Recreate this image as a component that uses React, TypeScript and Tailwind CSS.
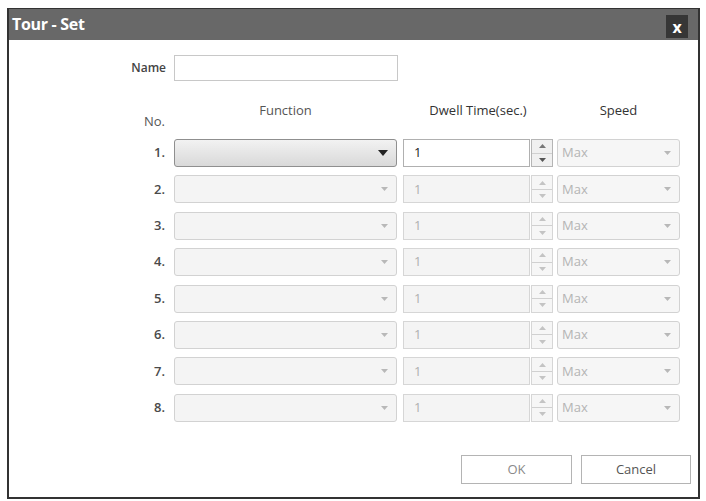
const rows = [1, 2, 3, 4, 5, 6, 7, 8];

const Spinner = ({ active }: { active: boolean }) => (
  <div
    className={`w-[22px] h-full flex flex-col border ${
      active ? "border-[#b5b5b5] bg-[#f0f0f0]" : "border-[#d6d6d6] bg-[#f6f6f6]"
    }`}
  >
    <div className="flex-1 flex items-center justify-center border-b border-[#d0d0d0]">
      <svg width="7" height="4" viewBox="0 0 7 4">
        <path d="M0 4 L3.5 0 L7 4 Z" fill={active ? "#777" : "#c4c4c4"} />
      </svg>
    </div>
    <div className="flex-1 flex items-center justify-center">
      <svg width="7" height="4" viewBox="0 0 7 4">
        <path d="M0 0 L3.5 4 L7 0 Z" fill={active ? "#555" : "#c4c4c4"} />
      </svg>
    </div>
  </div>
);

const SmallArrow = () => (
  <svg width="7" height="4" viewBox="0 0 7 4">
    <path d="M0 0 L3.5 4 L7 0 Z" fill="#b8b8b8" />
  </svg>
);

const Row = ({ n }: { n: number }) => {
  const active = n === 1;
  return (
    <div className="flex items-center h-[28px]">
      <div className="w-[158px] pr-[2px] text-right text-[13px] font-semibold text-[#4a4a4a]">
        {n}.
      </div>
      <div
        className={`ml-[7px] w-[223px] h-full rounded-[3px] border flex items-center justify-end pr-[8px] ${
          active
            ? "border-[#8f8f8f] bg-gradient-to-b from-[#f2f2f2] to-[#d9d9d9]"
            : "border-[#d2d2d2] bg-[#f4f4f4]"
        }`}
      >
        {active ? (
          <svg width="10" height="6" viewBox="0 0 10 6">
            <path d="M0 0 L5 6 L10 0 Z" fill="#222" />
          </svg>
        ) : (
          <SmallArrow />
        )}
      </div>
      <div className="ml-[6px] w-[150px] h-full flex gap-[1px]">
        <div
          className={`flex-1 border flex items-center pl-[10px] text-[13px] ${
            active
              ? "border-[#b0b0b0] bg-white text-[#222]"
              : "border-[#d6d6d6] bg-[#f4f4f4] text-[#b0b0b0]"
          }`}
        >
          1
        </div>
        <Spinner active={active} />
      </div>
      <div className="ml-[4px] w-[123px] h-full rounded-[3px] border border-[#d2d2d2] bg-[#f6f6f6] flex items-center justify-between pl-[4px] pr-[8px] text-[13px] text-[#b4b4b4]">
        <span>Max</span>
        <SmallArrow />
      </div>
    </div>
  );
};

export default function App() {
  return (
    <div
      className="w-[706px] h-[501px] bg-white pt-[8px] pl-[7px]"
      style={{ fontFamily: '"Open Sans", "Noto Sans", "DejaVu Sans", sans-serif' }}
    >
      <div className="w-[693px] h-[491px] border-x-[2px] border-b-[2px] border-t border-[#333] flex flex-col">
        {/* title bar */}
        <div className="h-[31px] bg-[#686868] flex items-start justify-between pl-[3px] pr-[10px]">
          <span className="mt-[5px] text-white font-bold text-[16px] leading-[20px] tracking-[-0.3px]">
            Tour - Set
          </span>
          <div className="mt-[6px] w-[22px] h-[23px] bg-[#363636] flex items-center justify-center text-white font-bold text-[16px] leading-none">
            x
          </div>
        </div>

        <div className="flex-1 flex flex-col">
          {/* name */}
          <div className="mt-[15px] flex items-center h-[26px]">
            <div className="w-[161px] pr-[4px] text-right text-[12px] font-semibold text-[#444]">
              Name
            </div>
            <div className="ml-[4px] w-[224px] h-full border border-[#c8c8c8] bg-white" />
          </div>

          {/* headers */}
          <div className="mt-[17px] flex h-[40px] text-[13px] text-[#555]">
            <div className="w-[158px] pr-[2px] pt-[14px] text-right">No.</div>
            <div className="ml-[7px] w-[223px] text-center pt-[3px]">Function</div>
            <div className="ml-[6px] w-[150px] text-center pt-[3px] text-[#333]">
              Dwell Time(sec.)
            </div>
            <div className="ml-[4px] w-[123px] text-center pt-[3px] text-[#333]">
              Speed
            </div>
          </div>

          {/* rows */}
          <div className="mt-[1px] flex flex-col gap-[8.4px]">
            {rows.map((n) => (
              <Row key={n} n={n} />
            ))}
          </div>

          {/* buttons */}
          <div className="mt-auto mb-[13px] flex justify-end gap-[9px] pr-[7px]">
            <button className="w-[111px] h-[29px] border border-[#b4b4b4] bg-white text-[13px] text-[#8a8a8a]">
              OK
            </button>
            <button className="w-[110px] h-[29px] border border-[#b4b4b4] bg-white text-[13px] text-[#555]">
              Cancel
            </button>
          </div>
        </div>
      </div>
    </div>
  );
}
